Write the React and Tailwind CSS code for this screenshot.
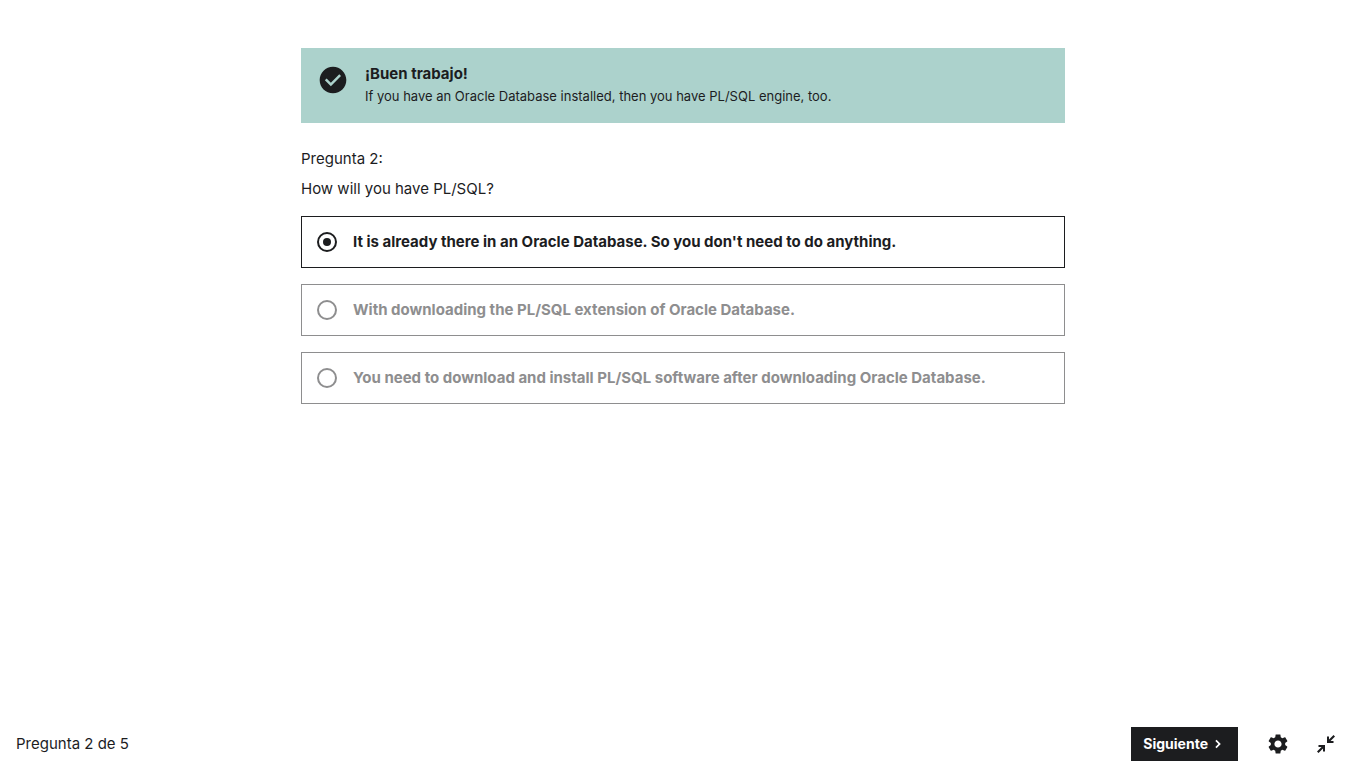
import { useState } from 'react';

const answers = [
  "It is already there in an Oracle Database. So you don't need to do anything.",
  'With downloading the PL/SQL extension of Oracle Database.',
  'You need to download and install PL/SQL software after downloading Oracle Database.',
];

function Icon({ d, className }) {
  return (
    <svg viewBox="0 0 24 24" fill="currentColor" aria-hidden="true" className={className}>
      <path d={d} />
    </svg>
  );
}

const CHECK =
  'M12 2C6.48 2 2 6.48 2 12s4.48 10 10 10 10-4.48 10-10S17.52 2 12 2zm-1.6 14.6-4.5-4.5 1.3-1.3 3.2 3.2 6.3-6.3L18 9z';
const GEAR =
  'M19.14 12.94c.04-.3.06-.61.06-.94 0-.32-.02-.64-.07-.94l2.03-1.58c.18-.14.23-.41.12-.61l-1.92-3.32c-.12-.22-.37-.29-.59-.22l-2.39.96c-.5-.38-1.03-.7-1.62-.94l-.36-2.54c-.04-.24-.24-.41-.48-.41h-3.84c-.24 0-.43.17-.47.41l-.36 2.54c-.59.24-1.13.57-1.62.94l-2.39-.96c-.22-.08-.47 0-.59.22L2.74 8.87c-.12.21-.08.47.12.61l2.03 1.58c-.05.3-.09.63-.09.94s.02.64.07.94l-2.03 1.58c-.18.14-.23.41-.12.61l1.92 3.32c.12.22.37.29.59.22l2.39-.96c.5.38 1.03.7 1.62.94l.36 2.54c.05.24.24.41.48.41h3.84c.24 0 .44-.17.47-.41l.36-2.54c.59-.24 1.13-.56 1.62-.94l2.39.96c.22.08.47 0 .59-.22l1.92-3.32c.12-.22.07-.47-.12-.61l-2.01-1.58zM12 15.6c-1.98 0-3.6-1.62-3.6-3.6s1.62-3.6 3.6-3.6 3.6 1.62 3.6 3.6-1.62 3.6-3.6 3.6z';
const COLLAPSE =
  'M13 11V4.5h2v3L19.5 3 21 4.5 16.5 9h3v2zM11 13v6.5H9v-3L4.5 21 3 19.5 7.5 15h-3v-2zM14.5 9.5V6.8l2.7 2.7zM9.5 14.5v2.7l-2.7-2.7z';
const CHEVRON = 'M8 16.6 12.6 12 8 7.4 9.8 5.6l6.4 6.4-6.4 6.4z';

export default function App() {
  const [selected, setSelected] = useState(0);
  return (
    <div className="flex min-h-screen flex-col bg-white font-['Inter',sans-serif] text-[#1c1d1f]">
      <main className="mx-auto w-full max-w-[812px] flex-1 px-6 pt-12">
        <div role="status" className="flex gap-4 bg-[#acd2cc] p-4">
          <Icon d={CHECK} className="size-8 shrink-0" />
          <div>
            <h2 className="text-[15px] leading-5 font-bold">¡Buen trabajo!</h2>
            <p className="pt-0.5 text-[13px] leading-[21px]">
              If you have an Oracle Database installed, then you have PL/SQL engine, too.
            </p>
          </div>
        </div>
        <form>
          <fieldset>
            <legend className="pt-6 text-[15px]">
              <span className="block leading-6">Pregunta 2:</span>
              <span className="mt-1.5 block leading-6">How will you have PL/SQL?</span>
            </legend>
            <ul className="mt-[15px] flex flex-col gap-4">
              {answers.map((text, i) => (
                <li key={text}>
                  <label
                    className={`flex items-center gap-4 border px-[15px] py-3 text-[15px] leading-[26px] font-bold ${
                      selected === i ? 'border-[#1c1d1f]' : 'border-[#8e8e8f] text-[#8e8e8f]'
                    }`}
                  >
                    <input
                      type="radio"
                      name="answer"
                      checked={selected === i}
                      onChange={() => setSelected(i)}
                      className="grid size-5 shrink-0 appearance-none place-items-center rounded-full border-2 border-current before:size-2 before:rounded-full checked:before:bg-current"
                    />
                    <span>{text}</span>
                  </label>
                </li>
              ))}
            </ul>
          </fieldset>
        </form>
      </main>
      <footer className="flex h-12 items-center pr-6 pl-4">
        <p className="flex-1 text-[15px] leading-6">Pregunta 2 de 5</p>
        <button type="button" className="flex h-[34px] items-center gap-0.5 bg-[#1c1d1f] px-3 text-sm font-bold text-white">
          Siguiente
          <Icon d={CHEVRON} className="size-4" />
        </button>
        <button type="button" aria-label="Ajustes" className="ml-6 grid size-8 place-items-center">
          <Icon d={GEAR} className="size-6" />
        </button>
        <button type="button" aria-label="Contraer" className="ml-4 grid size-8 place-items-center">
          <Icon d={COLLAPSE} className="size-6" />
        </button>
      </footer>
    </div>
  );
}
